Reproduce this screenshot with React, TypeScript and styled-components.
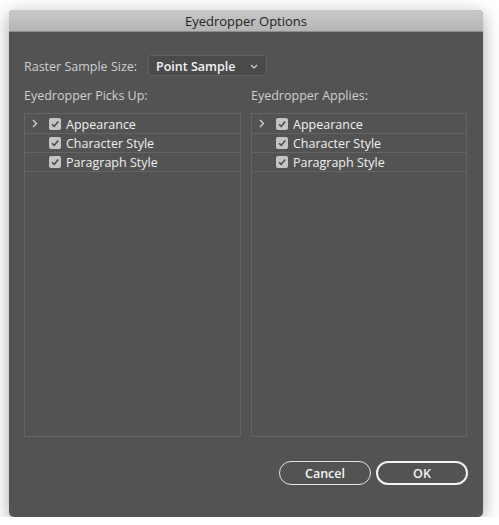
import React from 'react';
import styled, {createGlobalStyle} from 'styled-components';

const GlobalStyle = createGlobalStyle`
  html, body {
    margin: 0;
    padding: 0;
    background: #ffffff;
  }
  body {
    font-family: "Open Sans", "Liberation Sans", sans-serif;
  }
`;

const items = ['Appearance', 'Character Style', 'Paragraph Style'];

function Chevron() {
  return (
    <svg width="6" height="9" viewBox="0 0 6 9">
      <polyline points="1,1 4.5,4.5 1,8" fill="none" stroke="#d8d8d8" strokeWidth="1.2" />
    </svg>
  );
}

function CheckMark() {
  return (
    <svg width="12" height="12" viewBox="0 0 12 12">
      <polyline points="3,6.2 5.2,8.4 9.2,3.6" fill="none" stroke="#4a4a4a" strokeWidth="1.6" />
    </svg>
  );
}

function AttrList({title}: {title: string}) {
  return (
    <Column>
      <ColumnLabel>{title}</ColumnLabel>
      <ListBox>
        {items.map((name, i) => (
          <ListRow key={name} first={i === 0}>
            <Toggle>{i === 0 && <Chevron />}</Toggle>
            <Check><CheckMark /></Check>
            <RowText>{name}</RowText>
          </ListRow>
        ))}
      </ListBox>
    </Column>
  );
}

export default function App() {
  return (
    <>
      <GlobalStyle />
      <Window>
        <TitleBar>Eyedropper Options</TitleBar>
        <Body>
          <SampleRow>
            <Label>Raster Sample Size:</Label>
            <Select>
              <span>Point Sample</span>
              <svg width="8" height="5" viewBox="0 0 8 5">
                <polyline points="1,1 4,4 7,1" fill="none" stroke="#d8d8d8" strokeWidth="1.1" />
              </svg>
            </Select>
          </SampleRow>
          <Columns>
            <AttrList title="Eyedropper Picks Up:" />
            <AttrList title="Eyedropper Applies:" />
          </Columns>
          <Buttons>
            <Button>Cancel</Button>
            <Button primary>OK</Button>
          </Buttons>
        </Body>
      </Window>
    </>
  );
}

const Window = styled.div`
  margin: 10px 0 0 9px;
  width: 474px;
  height: 507px;
  border-radius: 5px;
  overflow: hidden;
  background: #535353;
  box-shadow: 0 4px 18px rgba(0, 0, 0, 0.35);
  display: flex;
  flex-direction: column;
`;

const TitleBar = styled.div`
  height: 22px;
  flex: none;
  box-sizing: border-box;
  background: linear-gradient(#c9c9c9, #b4b4b4);
  border-bottom: 1px solid #8c8c8c;
  color: #242424;
  font-size: 13px;
  line-height: 23px;
  text-align: center;
`;

const Body = styled.div`
  flex: 1;
  padding: 23px 16px 0 15px;
  display: flex;
  flex-direction: column;
`;

const SampleRow = styled.div`
  display: flex;
  align-items: center;
  height: 21px;
`;

const Label = styled.span`
  color: #cfcfcf;
  font-size: 12.5px;
  width: 124px;
  padding-top: 2px;
`;

const Select = styled.div`
  box-sizing: border-box;
  width: 119px;
  height: 21px;
  border: 1px solid #616161;
  border-radius: 3px;
  background: #4a4a4a;
  display: flex;
  align-items: center;
  justify-content: space-between;
  padding: 1px 8px 0 7px;
  color: #f2f2f2;
  font-size: 12.5px;
  font-weight: 600;
`;

const Columns = styled.div`
  display: grid;
  grid-template-columns: 217px 216px;
  column-gap: 10px;
`;

const Column = styled.div`
  display: flex;
  flex-direction: column;
`;

const ColumnLabel = styled.div`
  color: #cfcfcf;
  font-size: 12.5px;
  line-height: 16px;
  margin: 12px 0 9px;
`;

const ListBox = styled.div`
  box-sizing: border-box;
  height: 324px;
  border: 1px solid #656565;
`;

const ListRow = styled.div<{first?: boolean}>`
  display: flex;
  align-items: center;
  height: ${p => (p.first ? 19 : 18)}px;
  border-bottom: 1px solid #646464;
`;

const Toggle = styled.div`
  width: 24px;
  display: flex;
  justify-content: flex-start;
  padding-left: 7px;
  box-sizing: border-box;
`;

const Check = styled.div`
  width: 12px;
  height: 12px;
  border-radius: 2px;
  background: #c4c4c4;
  display: flex;
  margin-right: 5px;
`;

const RowText = styled.span`
  color: #f0f0f0;
  font-size: 12.5px;
  padding-top: 1px;
`;

const Buttons = styled.div`
  display: flex;
  justify-content: flex-end;
  gap: 5px;
  margin-top: 24px;
  margin-right: -1px;
`;

const Button = styled.button<{primary?: boolean}>`
  box-sizing: border-box;
  width: 92px;
  height: 24px;
  border-radius: 12px;
  background: transparent;
  border: ${p => (p.primary ? '2px solid #f2f2f2' : '1px solid #e4e4e4')};
  color: #f4f4f4;
  font-family: "Open Sans", "Liberation Sans", sans-serif;
  font-size: 12.5px;
  font-weight: 600;
  padding: 0;
`;
